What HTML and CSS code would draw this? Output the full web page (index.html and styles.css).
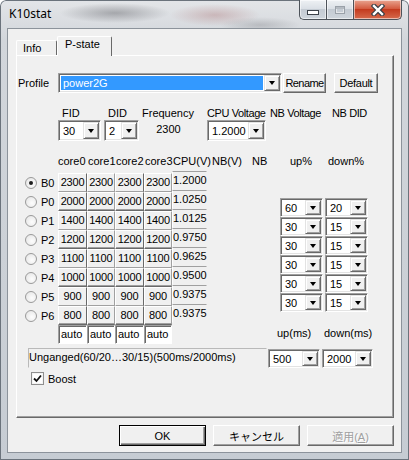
FILE: index.html
```html
<!DOCTYPE html>
<html lang="ja">
<head>
    <meta charset="UTF-8">
    <title>K10stat</title>
    <link rel="stylesheet" href="styles.css">
</head>
<body>

<div class="window">
    <div class="titlebar">
        <span class="title">K10stat</span>
        <div class="caption-btns">
            <span class="cbtn min"><i></i></span>
            <span class="cbtn max"><i></i></span>
            <span class="cbtn close">
                <svg width="14" height="12" viewBox="0 0 14 12">
                    <path d="M3 2l8 8M11 2l-8 8" stroke="#3a3f46" stroke-width="4.6" stroke-linecap="square"/>
                    <path d="M3 2l8 8M11 2l-8 8" stroke="#fff" stroke-width="2.4" stroke-linecap="square"/>
                </svg>
            </span>
        </div>
    </div>

    <div class="client">
        <div class="tabs">
            <div class="tab">Info</div>
            <div class="tab active">P-state</div>
        </div>

        <div class="panel">
            <!-- profile -->
            <div class="profile-row">
                <label class="profile-label">Profile</label>
                <div class="combo profile-combo"><span class="val selected">power2G</span><span class="drop"></span></div>
                <button class="btn rename">Rename</button>
                <button class="btn default-btn">Default</button>
            </div>

            <div class="field-labels">
                <span class="w46">FID</span>
                <span class="w34">DID</span>
                <span class="w65">Frequency</span>
                <span class="w63 tight">CPU Voltage</span>
                <span class="w62 tight">NB Voltage</span>
                <span class="tight">NB DID</span>
            </div>
            <div class="field-row">
                <div class="combo fid"><span class="val">30</span><span class="drop"></span></div>
                <div class="combo did"><span class="val">2</span><span class="drop"></span></div>
                <div class="freq">2300</div>
                <div class="combo cpuv"><span class="val">1.2000</span><span class="drop"></span></div>
            </div>

            <div class="col-head">
                <span class="w30">core0</span>
                <span class="w28">core1</span>
                <span class="w29">core2</span>
                <span class="w28">core3</span>
                <span class="w39">CPU(V)</span>
                <span class="w40">NB(V)</span>
                <span class="w38">NB</span>
                <span class="w38">up%</span>
                <span>down%</span>
            </div>

            <div class="main">
                <div class="states">
                    <div class="state"><span class="radio checked"></span>B0</div>
                    <div class="state"><span class="radio"></span>P0</div>
                    <div class="state"><span class="radio"></span>P1</div>
                    <div class="state"><span class="radio"></span>P2</div>
                    <div class="state"><span class="radio"></span>P3</div>
                    <div class="state"><span class="radio"></span>P4</div>
                    <div class="state"><span class="radio"></span>P5</div>
                    <div class="state"><span class="radio"></span>P6</div>
                </div>

                <div class="cores" id="cores"></div>

                <div class="volts">
                    <div class="volt">1.2000</div>
                    <div class="volt">1.0250</div>
                    <div class="volt">1.0125</div>
                    <div class="volt">0.9750</div>
                    <div class="volt">0.9625</div>
                    <div class="volt">0.9500</div>
                    <div class="volt">0.9375</div>
                    <div class="volt">0.9375</div>
                </div>

                <div class="rates">
                    <div class="rate-row">
                        <div class="combo rate"><span class="val">60</span><span class="drop"></span></div>
                        <div class="combo rate"><span class="val">20</span><span class="drop"></span></div>
                    </div>
                    <div class="rate-row">
                        <div class="combo rate"><span class="val">30</span><span class="drop"></span></div>
                        <div class="combo rate"><span class="val">15</span><span class="drop"></span></div>
                    </div>
                    <div class="rate-row">
                        <div class="combo rate"><span class="val">30</span><span class="drop"></span></div>
                        <div class="combo rate"><span class="val">15</span><span class="drop"></span></div>
                    </div>
                    <div class="rate-row">
                        <div class="combo rate"><span class="val">30</span><span class="drop"></span></div>
                        <div class="combo rate"><span class="val">15</span><span class="drop"></span></div>
                    </div>
                    <div class="rate-row">
                        <div class="combo rate"><span class="val">30</span><span class="drop"></span></div>
                        <div class="combo rate"><span class="val">15</span><span class="drop"></span></div>
                    </div>
                    <div class="rate-row">
                        <div class="combo rate"><span class="val">30</span><span class="drop"></span></div>
                        <div class="combo rate"><span class="val">15</span><span class="drop"></span></div>
                    </div>
                    <div class="rate-labels">
                        <span class="w47">up(ms)</span>
                        <span>down(ms)</span>
                    </div>
                </div>
            </div>

            <div class="status-row">
                <div class="status">Unganged(60/20…30/15)(500ms/2000ms)</div>
                <div class="combo ms500"><span class="val">500</span><span class="drop"></span></div>
                <div class="combo ms2000"><span class="val">2000</span><span class="drop"></span></div>
            </div>

            <div class="boost">
                <span class="checkbox">
                    <svg width="9" height="9" viewBox="0 0 9 9"><path d="M1 4.5l2.5 2.5L8 1.5" fill="none" stroke="#111" stroke-width="1.8"/></svg>
                </span>
                Boost
            </div>
        </div>

        <div class="dlg-buttons">
            <button class="btn dlg default">OK</button>
            <button class="btn dlg jp">キャンセル</button>
            <button class="btn dlg jp" disabled>適用(<u>A</u>)</button>
        </div>
    </div>
</div>

<script>
    // P-state の周波数テーブル
    const rows = [2300, 2000, 1400, 1200, 1100, 1000, 900, 800];
    const cores = document.getElementById('cores');

    rows.forEach((mhz, r) => {
        for (let c = 0; c < 4; c++) {
            const cell = document.createElement('div');
            cell.className = 'cell';
            if (r % 2 === 1) cell.classList.add('row-end');
            if (c % 2 === 0) cell.classList.add('col-end');
            cell.textContent = mhz;
            cores.appendChild(cell);
        }
    });

    for (let c = 0; c < 4; c++) {
        const cell = document.createElement('div');
        cell.className = 'cell auto';
        cell.textContent = 'auto';
        cores.appendChild(cell);
    }
</script>

</body>
</html>
```

FILE: styles.css
```css
* {
    box-sizing: border-box;
}

body {
    margin: 0;
    background: #fff;
    font-family: "Liberation Sans", Arial, sans-serif;
    font-size: 11px;
    color: #000;
}

/* window frame */
.window {
    width: 409px;
    height: 460px;
    overflow: hidden;
    border-radius: 6px 6px 0 0;
    box-shadow: inset 0 0 0 1px #6b737c;
    background:
        radial-gradient(ellipse 55px 10px at 115px 13px, rgba(60, 60, 66, 0.35), transparent),
        radial-gradient(ellipse 45px 11px at 215px 15px, rgba(160, 90, 90, 0.3), transparent),
        radial-gradient(ellipse 40px 8px at 260px 25px, rgba(60, 60, 66, 0.2), transparent),
        linear-gradient(#e3e5e8, #d2d6db 40px, #c6ccd3);
}

.titlebar {
    height: 29px;
    display: flex;
}

.title {
    padding: 7px 0 0 9px;
    font-family: "Noto Sans", sans-serif;
    font-size: 12px;
    line-height: 14px;
    color: #000;
}

.caption-btns {
    display: flex;
    height: 20px;
    margin-left: auto;
    margin-right: 7px;
}

.cbtn {
    height: 20px;
    display: flex;
    align-items: center;
    justify-content: center;
    border: 1px solid #4d535a;
    border-top: none;
    box-shadow: inset 0 0 0 1px rgba(255, 255, 255, 0.55);
    background: linear-gradient(#eef1f4, #dbe0e6 45%, #c4cbd3 50%, #ced5dc);
}

.min {
    width: 27px;
    border-right: none;
    border-radius: 0 0 0 5px;
}

.min i {
    width: 12px;
    height: 5px;
    margin-top: 5px;
    background: #fff;
    border: 1px solid #3c424a;
}

.max {
    width: 27px;
    border-right: none;
}

.max i {
    width: 10px;
    height: 8px;
    border: 1px solid #9aa1a9;
    box-shadow: inset 0 2px #b5bbc2, inset 0 0 0 1px #e4e7ea;
}

.close {
    width: 49px;
    border-radius: 0 0 5px 0;
    background: linear-gradient(#e9a591, #d45c41 45%, #c33b1f 50%, #d66a4c);
}

/* client area */
.client {
    margin-left: 8px;
    width: 393px;
    height: 423px;
    padding-top: 7px;
    background: #f0f0f0;
    box-shadow: 0 0 0 1px #8c939b;
}

.tabs {
    display: flex;
    align-items: flex-end;
    height: 19px;
    margin-left: 8px;
}

.tab {
    width: 41px;
    height: 15px;
    padding: 1px 0 0 6px;
    line-height: 13px;
    border: 1px solid;
    border-color: #fff #696969 transparent #fff;
    border-bottom: none;
    border-radius: 2px 2px 0 0;
}

.tab.active {
    position: relative;
    z-index: 1;
    width: 55px;
    height: 20px;
    margin-bottom: -1px;
    padding: 1px 0 0 7px;
    background: #f0f0f0;
}

.panel {
    margin-left: 8px;
    width: 378px;
    height: 363px;
    border: 1px solid;
    border-color: #fff #696969 #696969 #fff;
    box-shadow: inset -1px -1px #a0a0a0;
}

/* buttons */
.btn {
    height: 20px;
    padding: 0;
    font: inherit;
    letter-spacing: -0.3px;
    color: #000;
    background: #f0f0f0;
    border: 1px solid;
    border-color: #fff #696969 #696969 #fff;
    box-shadow: inset -1px -1px #a0a0a0;
}

.btn:disabled {
    color: #a0a0a0;
    text-shadow: 1px 1px #fff;
}

.rename {
    width: 43px;
    margin-left: 1px;
    letter-spacing: -0.6px;
}

.default-btn {
    width: 44px;
    margin-left: 8px;
}

.dlg-buttons {
    display: flex;
    justify-content: flex-end;
    gap: 7px;
    margin-top: 7px;
    padding-right: 7px;
}

.dlg {
    width: 87px;
    height: 21px;
    letter-spacing: 0;
}

.dlg.default {
    border-color: #000;
    box-shadow: inset 1px 1px #fff, inset -1px -1px #696969, inset -2px -2px #a0a0a0;
}

.jp {
    font-family: "Liberation Sans", "Noto Sans CJK JP", sans-serif;
}

/* combo boxes */
.combo {
    display: flex;
    height: 21px;
    padding: 1px;
    background: #fff;
    border: 1px solid;
    border-color: #a0a0a0 #fff #fff #a0a0a0;
    box-shadow: inset 1px 1px #696969, inset -1px -1px #e3e3e3;
}

.combo .val {
    flex: 1;
    padding: 0 0 0 2px;
    margin: 1px 0 0 1px;
    line-height: 16px;
    white-space: nowrap;
    overflow: hidden;
}

.combo .val.selected {
    margin: 1px;
    background: #3399ff;
    color: #fff;
    line-height: 14px;
}

.combo .drop {
    width: 16px;
    display: flex;
    align-items: center;
    justify-content: center;
    background: #f0f0f0;
    border: 1px solid;
    border-color: #e3e3e3 #696969 #696969 #e3e3e3;
    box-shadow: inset 1px 1px #fff, inset -1px -1px #a0a0a0;
}

.combo .drop::after {
    content: "";
    border-left: 3.5px solid transparent;
    border-right: 3.5px solid transparent;
    border-top: 4px solid #000;
}

/* profile row */
.profile-row {
    display: flex;
    align-items: center;
    height: 20px;
    margin-top: 17px;
}

.profile-label {
    width: 41px;
    padding-left: 1px;
}

.profile-combo {
    width: 224px;
    height: 20px;
}

/* FID / DID row */
.field-labels,
.col-head,
.rate-labels {
    display: flex;
    line-height: 13px;
    white-space: nowrap;
}

.field-labels {
    margin-top: 14px;
    padding-left: 45px;
}

.tight {
    letter-spacing: -0.4px;
}

.field-row {
    display: flex;
    height: 21px;
    padding-left: 41px;
}

.fid { width: 43px; }
.did { width: 35px; margin-left: 3px; }
.cpuv { width: 59px; margin-left: 10px; }

.freq {
    width: 57px;
    margin-left: 1px;
    line-height: 19px;
    text-align: center;
}

.col-head {
    margin-top: 14px;
    padding-left: 41px;
}

.w28 { width: 28px; }
.w29 { width: 29px; }
.w30 { width: 30px; }
.w34 { width: 34px; }
.w38 { width: 38px; }
.w39 { width: 39px; }
.w40 { width: 40px; }
.w46 { width: 46px; }
.w47 { width: 47px; }
.w62 { width: 62px; }
.w63 { width: 63px; }
.w65 { width: 65px; }

/* P-state table */
.main {
    display: flex;
    margin-top: 5px;
}

.states {
    width: 41px;
}

.state {
    display: flex;
    align-items: center;
    height: 19px;
    padding-left: 8px;
}

.radio {
    width: 12px;
    height: 12px;
    margin-right: 4px;
    border-radius: 50%;
    border: 1px solid #9a9a9a;
    background: radial-gradient(circle at 60% 60%, #fdfdfd, #e2e2e2);
    display: flex;
    align-items: center;
    justify-content: center;
}

.radio.checked::after {
    content: "";
    width: 4px;
    height: 4px;
    border-radius: 50%;
    background: #1d1d1d;
}

.cores {
    display: grid;
    grid-template-columns: 29px 28px 29px 28px;
    grid-auto-rows: 19px;
}

.cell {
    text-align: center;
    line-height: 17px;
    letter-spacing: -0.2px;
    background: #f0f0f0;
    border: 1px solid;
    border-color: #fff #a0a0a0 #a0a0a0 #fff;
}

.cell.row-end {
    border-bottom-color: #696969;
    box-shadow: inset 0 -1px #a0a0a0;
}

.cell.col-end {
    border-right-color: #696969;
}

.cell.auto {
    text-align: left;
    padding-left: 2px;
    letter-spacing: 0;
    background: #fff;
    border-color: #a0a0a0 #fff #fff #a0a0a0;
    box-shadow: inset 1px 1px #696969;
}

.volts {
    width: 35px;
    margin-top: -2px;
}

.volt {
    height: 19px;
    line-height: 17px;
    white-space: nowrap;
    border: 1px solid;
    border-color: #a0a0a0 #f0f0f0 #f0f0f0 #fff;
}

.rates {
    margin-left: 73px;
    margin-top: 25px;
}

.rate-row {
    display: flex;
    gap: 2px;
}

.combo.rate {
    width: 43px;
    height: 19px;
}

.combo.rate .val {
    line-height: 14px;
}

.rate-labels {
    margin-top: 15px;
    margin-left: -3px;
}

/* status + boost */
.status-row {
    display: flex;
    align-items: flex-end;
    height: 21px;
    margin-top: 3px;
    padding-left: 11px;
}

.status {
    width: 239px;
    height: 20px;
    line-height: 16px;
    white-space: nowrap;
    border: 1px solid;
    border-color: #b9b9b9 #f0f0f0 #f0f0f0 #b9b9b9;
}

.ms500,
.ms2000 {
    height: 19px;
}

.ms500 { width: 52px; margin-left: 1px; }
.ms2000 { width: 51px; margin-left: 2px; }

.ms500 .val,
.ms2000 .val {
    line-height: 15px;
}

.boost {
    display: flex;
    align-items: center;
    gap: 4px;
    margin-top: 4px;
    padding-left: 14px;
}

.checkbox {
    width: 13px;
    height: 13px;
    display: flex;
    align-items: center;
    justify-content: center;
    background: #fff;
    border: 1px solid #8f8f8f;
    box-shadow: inset 0 0 0 1px #f4f4f4;
}
```
